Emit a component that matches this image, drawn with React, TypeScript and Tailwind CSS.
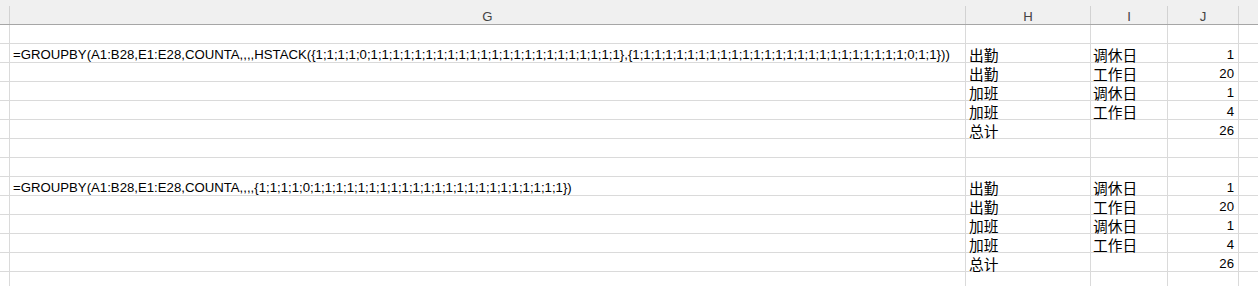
import React from 'react';

const ones = (n: number) => Array.from({ length: n }, () => 1);
const arrA = [1, 1, 1, 1, 0, ...ones(23)];
const arrB = [...ones(25), 0, 1, 1];

const F1 = `=GROUPBY(A1:B28,E1:E28,COUNTA,,,,HSTACK({${arrA.join(';')}},{${arrB.join(';')}}))`;
const F2 = `=GROUPBY(A1:B28,E1:E28,COUNTA,,,,{${arrA.join(';')}})`;

type Row = { g?: string; h?: string; i?: string; j?: string };

const result: Row[] = [
  { h: '出勤', i: '调休日', j: '1' },
  { h: '出勤', i: '工作日', j: '20' },
  { h: '加班', i: '调休日', j: '1' },
  { h: '加班', i: '工作日', j: '4' },
  { h: '总计', j: '26' },
];

const ROWS: Row[] = [
  {},
  { ...result[0], g: F1 },
  ...result.slice(1),
  {},
  {},
  { ...result[0], g: F2 },
  ...result.slice(1),
  {},
];

const COLS = ['', 'G', 'H', 'I', 'J', ''];

const latin = "font-['Liberation_Sans',Arial,sans-serif] text-[13.2px]";
const cjk = "font-['Noto_Sans_CJK_SC','Liberation_Sans',sans-serif] text-[14.7px]";
const cell = 'h-[19px] border-r border-b border-[#dadada] pt-[3px] leading-[15px] whitespace-nowrap overflow-visible';

export default function App() {
  return (
    <div className="w-[1258px] h-[286px] overflow-hidden bg-white text-black">
      <div className="grid grid-cols-[10px_956px_125px_77px_71px_1fr]">
        {COLS.map((c, idx) => (
          <div key={'h' + idx} className="h-[25px] bg-[#f0f0f0] border-b border-[#a6a6a6] pt-[6px]">
            <div
              className={`h-full ${idx < 5 ? 'border-r border-[#d2d2d2]' : ''} pt-[3px] leading-[15px] text-center text-[#444] ${latin}`}
            >
              {c}
            </div>
          </div>
        ))}

        {ROWS.map((r, ri) => (
          <React.Fragment key={ri}>
            <div className={cell} />
            <div className={`${cell} pl-[3px] ${latin}`}>{r.g}</div>
            <div className={`${cell} pl-[3px] ${cjk}`}>{r.h}</div>
            <div className={`${cell} pl-[2px] ${cjk}`}>{r.i}</div>
            <div className={`${cell} pr-[4px] text-right ${latin}`}>{r.j}</div>
            <div className="h-[19px] border-b border-[#dadada]" />
          </React.Fragment>
        ))}
      </div>
    </div>
  );
}
